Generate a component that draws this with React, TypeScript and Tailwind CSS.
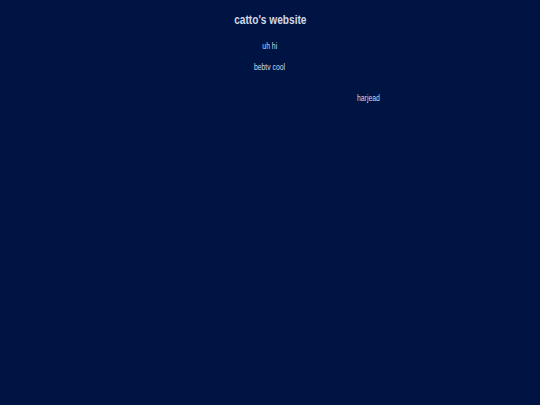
export default function App() {
  const font = { fontFamily: '"Liberation Sans", Arial, sans-serif' };
  return (
    <div className="min-h-[405px] w-full bg-[#001443] text-[#d2d9e8]" style={font}>
      <div className="flex flex-col items-center pt-[12px]">
        <h1 className="scale-x-[0.78] text-[13px] font-bold leading-[16px]">catto's website</h1>
        <p className="mt-[13px] scale-x-[0.76] text-[9px] leading-[11px]">uh hi</p>
        <p className="mt-[10px] scale-x-[0.76] text-[9px] leading-[11px]">bebtv cool</p>
      </div>
      <div className="pl-[357px] pt-[20px]">
        <p className="origin-left scale-x-[0.76] text-[9px] leading-[11px]">harjead</p>
      </div>
    </div>
  );
}
